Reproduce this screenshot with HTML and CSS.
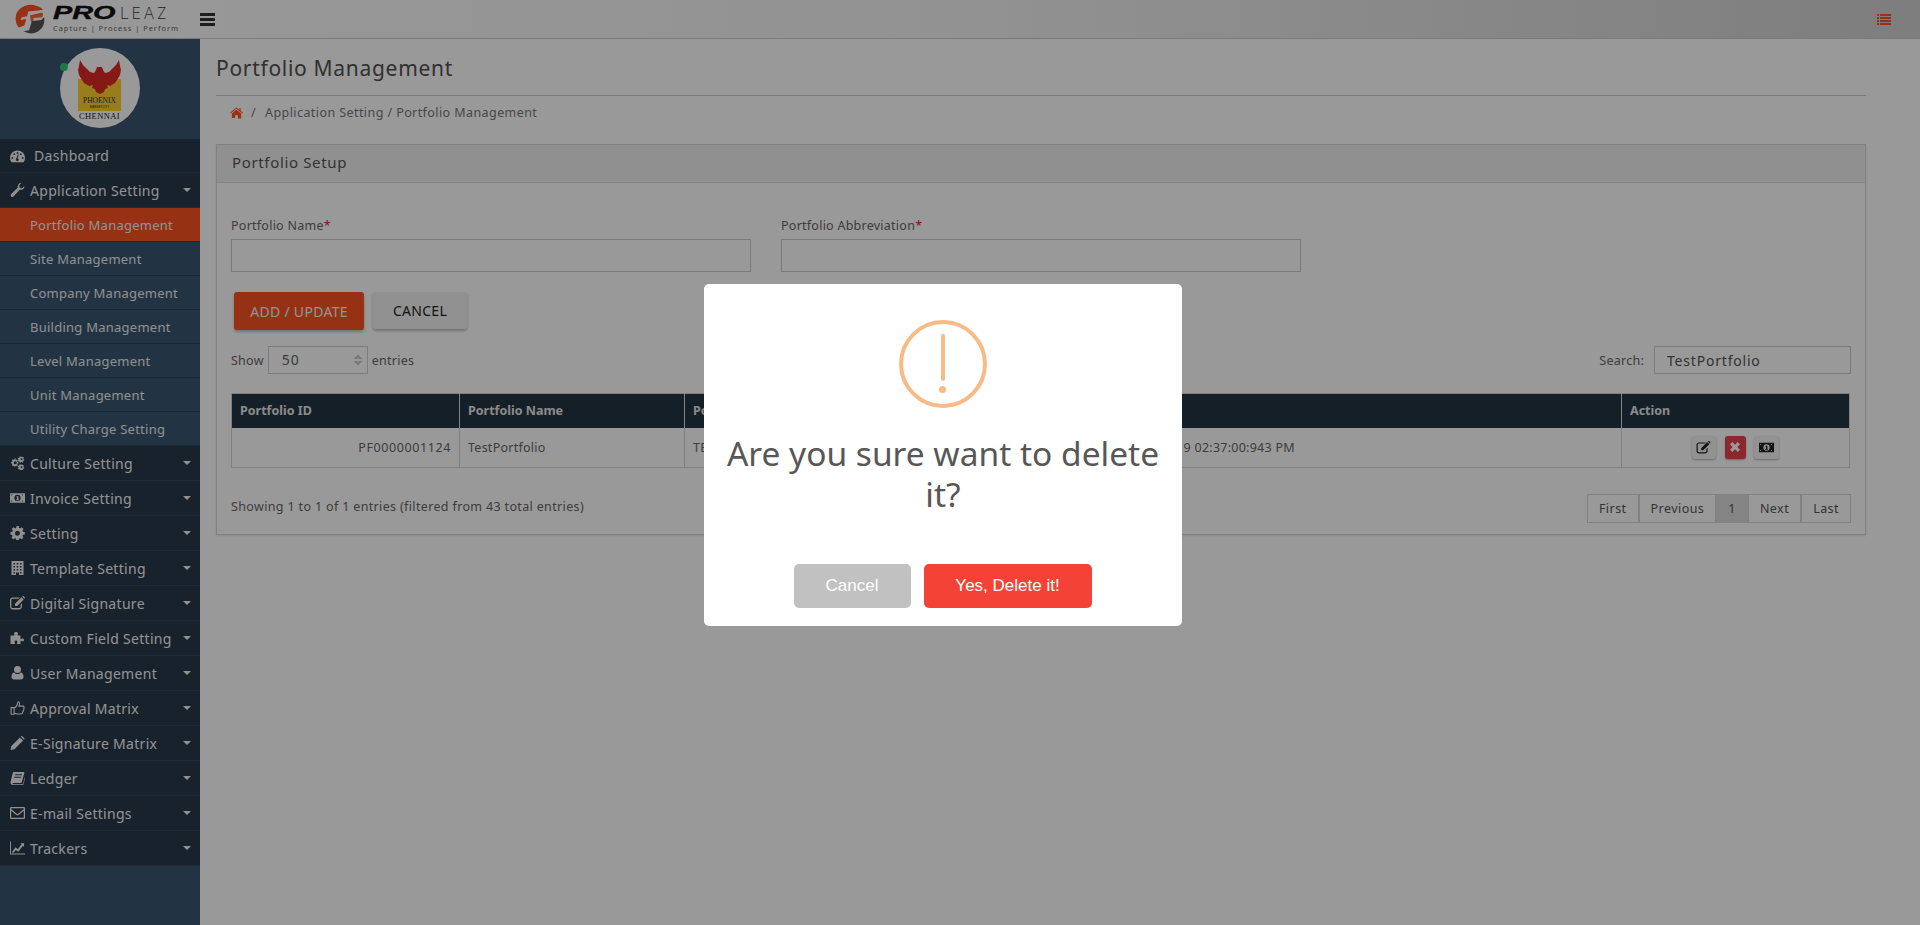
FILE: index.html
```html
<!DOCTYPE html>
<html lang="en">
<head>
    <meta charset="UTF-8">
    <title>Portfolio Management</title>
    <link rel="stylesheet" href="styles.css">
</head>
<body>
    <svg class="sprite" xmlns="http://www.w3.org/2000/svg">
        <symbol id="i-gauge" viewBox="0 0 16 14"><path d="M8 1a8 8 0 0 0-8 8c0 1.600.4 3 1.200 4.200.2.300.4.400.7.400h12.200c.3 0 .5-.1.700-.4C15.600 12 16 10.600 16 9a8 8 0 0 0-8-8zM2.500 10a1 1 0 1 1 0-2 1 1 0 0 1 0 2zm2-4a1 1 0 1 1 0-2 1 1 0 0 1 0 2zM8 4.700a1 1 0 1 1 0-2 1 1 0 0 1 0 2zm1.300 5.700a1.600 1.600 0 1 1-2.300-1.100l1.300-4 1 .3-1.300 4c.6.100 1.100.4 1.300.8zM11.500 6a1 1 0 1 1 0-2 1 1 0 0 1 0 2zm2 4a1 1 0 1 1 0-2 1 1 0 0 1 0 2z"/></symbol>
        <symbol id="i-wrench" viewBox="0 0 14 14"><path d="M13.700 3.200c.2.700.1 1.800-.6 2.600-1 1.100-2.400 1.300-3.600.8l-6.300 6.700c-.7.800-1.800.8-2.500.1-.7-.7-.7-1.800 0-2.500L7.400 4.600C7 3.400 7.200 2 8.200 1 9.100.1 10.200-.1 11-.1L8.800 2.200l.4 2.500 2.400.5z"/></symbol>
        <symbol id="i-cogs" viewBox="0 0 16 14"><path d="M5.600 3.500l.9.300.8-.6 1 1-.6.800.3.900 1 .2v1.500l-1 .2-.3.900.6.800-1 1-.8-.6-.9.300-.2 1H4.900l-.2-1-.9-.3-.8.600-1-1 .6-.8-.3-.9-1-.2V5.900l1-.2.300-.9-.6-.8 1-1 .8.600.9-.3.2-1h1.500zM5.600 5a1.700 1.700 0 1 0 0 3.400 1.700 1.700 0 0 0 0-3.400z"/><path d="M13 0l.5.700.8-.1.500 1-.6.600.2.800.8.300-.1 1-.9.200-.4.700.3.800-.9.500-.6-.6-.8.100-.5.700-1-.3V5.700l-.6-.5-.8.200-.5-.9.600-.6-.1-.8-.7-.5.300-1 .9.100.6-.6-.1-.8 1-.4.500.7h.8zM12.300 2a1 1 0 1 0 0 2 1 1 0 0 0 0-2zM13 8.500l.5.700.8-.1.500 1-.6.600.2.800.8.300-.1 1-.9.200-.4.700.3.800-.9.500-.6-.6-.8.100-.5.700-1-.3v-.9l-.6-.5-.8.200-.5-.9.600-.6-.1-.8-.7-.5.300-1 .9.100.6-.6-.1-.8 1-.4.500.7h.8zm-.7 2a1 1 0 1 0 0 2 1 1 0 0 0 0-2z"/></symbol>
        <symbol id="i-money" viewBox="0 0 16 12"><path fill-rule="evenodd" d="M0 1h16v10H0zm1.200 1.200v1.400a2 2 0 0 0 1.400-1.400zm11.200 0c.2.700.7 1.200 1.400 1.400V2.200zM1.200 8.400v1.400h1.400a2 2 0 0 0-1.400-1.400zm12.600 0c-.7.200-1.200.7-1.400 1.400h1.400zM8 2.600A3.300 3.400 0 1 0 8 9.400 3.300 3.400 0 0 0 8 2.600z"/><path fill-rule="evenodd" d="M7 4h2v3.500h.6v.8H6.400v-.8H7.400V5.200H6.800z"/></symbol>
        <symbol id="i-cog" viewBox="0 0 14 14"><path fill-rule="evenodd" d="M8.200 0l.4 1.900 1.100.5 1.600-1.100 1.700 1.700-1.100 1.600.5 1.100 1.900.4v2.400l-1.900.4-.5 1.100 1.100 1.600-1.700 1.700-1.600-1.100-1.100.5-.4 1.900H5.800l-.4-1.900-1.100-.5-1.600 1.100L1 11.600l1.100-1.600-.5-1.100L0 8.500V6.100l1.900-.4.500-1.100L1.300 3 3 1.300l1.600 1.100 1.100-.5L6.100 0zM7 4.700a2.500 2.500 0 1 0 0 5 2.500 2.500 0 0 0 0-5z"/></symbol>
        <symbol id="i-building" viewBox="0 0 12 14"><path fill-rule="evenodd" d="M0 0h12v14H7.500v-2.500h-3V14H0zm2 2v1.500h1.500V2zm3.200 0v1.500h1.600V2zm3.300 0v1.500H10V2zM2 5v1.500h1.500V5zm3.200 0v1.500h1.600V5zm3.300 0v1.500H10V5zM2 8v1.500h1.500V8zm3.200 0v1.500h1.600V8zm3.300 0v1.500H10V8zM2 11v1.500h1.500V11zm6.500 0v1.500H10V11z"/></symbol>
        <symbol id="i-edit" viewBox="0 0 15 14"><path d="M2.600 1.500H10L8.700 2.800H2.600c-.7 0-1.300.6-1.300 1.300v6.700c0 .7.600 1.300 1.300 1.300h6.700c.7 0 1.300-.6 1.300-1.300V8.500l1.300-1.300v3.600c0 1.400-1.200 2.600-2.600 2.600H2.600C1.200 13.400 0 12.200 0 10.800V4.100c0-1.400 1.200-2.600 2.600-2.600z"/><path d="M5 7.700L11.500 1.200l2.200 2.200-6.500 6.500H5zM12.100.6l.5-.4c.3-.3.8-.3 1.100 0l1 1c.3.300.3.800 0 1.100l-.4.500z"/></symbol>
        <symbol id="i-puzzle" viewBox="0 0 14 14"><path d="M5.500 1C6.700 1 7.500 1.700 7.500 2.500c0 .7-.5 1-.5 1.500 0 .3.300.5.800.5H10v3c0 .4.200.7.500.7.500 0 .8-.6 1.500-.6.900 0 1.500.700 1.500 1.400s-.6 1.300-1.500 1.300c-.7 0-1-.5-1.500-.5-.3 0-.5.300-.5.700V13H7c-.5 0-.7-.3-.7-.6 0-.5.600-.8.600-1.500 0-.8-.6-1.400-1.400-1.400s-1.500.6-1.500 1.400c0 .7.600 1 .6 1.500 0 .3-.2.600-.6.600H0V4.500h3.200c.5 0 .8-.2.800-.5 0-.5-.5-.8-.5-1.500C3.500 1.700 4.300 1 5.500 1z"/></symbol>
        <symbol id="i-user" viewBox="0 0 12 14"><path d="M6 0a3.500 3.500 0 1 1 0 7 3.500 3.500 0 0 1 0-7zM2.800 6.500C3.600 7.500 4.700 8 6 8s2.400-.5 3.200-1.500c1.800 0 2.800 1.600 2.800 4.300 0 1.900-1.100 2.700-2.400 2.700H2.400C1.100 13.500 0 12.700 0 10.800 0 8.100 1 6.500 2.800 6.500z"/></symbol>
        <symbol id="i-thumb" viewBox="0 0 14 14"><path fill="none" stroke="currentColor" stroke-width="1.100" d="M.6 6.600h3v6.600h-3zM3.600 7c1.800-.6 3.100-2.400 3.300-4.300.1-1 .2-2 .9-2 1.400 0 1.600 2 .6 4.400h3.900c1.400 0 1.700 1.300.9 2.100.5.800.3 1.600-.4 2 .2.800-.1 1.500-.7 1.800.1 1.200-.5 2-1.800 2H7c-1.200 0-2.200-.6-3.400-.8"/></symbol>
        <symbol id="i-pencil" viewBox="0 0 14 14"><path d="M0 14l.8-3.900L9.500 1.400l3.100 3.100L3.900 13.200zM10.300.6l.4-.4c.3-.3.8-.3 1.100 0l2 2c.3.300.3.800 0 1.100l-.4.400z"/></symbol>
        <symbol id="i-book" viewBox="0 0 14 14"><path fill-rule="evenodd" d="M3.400 1H13c.7 0 1 .5.800 1.200l-2.400 8.600c-.2.800-.8 1.200-1.500 1.200H2.800c-.6 0-.9.300-.8.700.1.300.4.500.8.500h9.100c.3 0 .5-.2.600-.5l2-7 .5.400-2.200 7.600c-.2.500-.6.800-1.100.8H2.600C1.300 14 .2 13 0 11.700c0-.5 0-.9.200-1.400L2.300 2c.1-.5.500-1 1.100-1zm1.400 2.300l-.3 1h6.800l.3-1zM4 5.700l-.3 1h6.800l.3-1z"/></symbol>
        <symbol id="i-mail" viewBox="0 0 15 12"><path fill="none" stroke="currentColor" stroke-width="1.200" d="M1.300.6h12.400c.4 0 .7.300.7.700v9.400c0 .4-.3.700-.7.700H1.300c-.4 0-.7-.3-.7-.7V1.300c0-.4.300-.7.700-.7zM.8 2.500l5.600 4.700c.6.500 1.600.5 2.200 0l5.600-4.700"/></symbol>
        <symbol id="i-chart" viewBox="0 0 16 14"><path d="M0 0h1v12.800h15V14H0z"/><path d="M2.500 10.600l3.400-4.400 2.500 2L12.300 3l-1.300-1.200h4v4l-1.200-1.300-5 6.500-2.600-2-2.400 3H2.500z"/></symbol>
        <symbol id="i-home" viewBox="0 0 14 12"><path d="M7 2.400l5 4.100v4.900c0 .3-.2.500-.5.500H8.500V8.500h-3v3h-3c-.3 0-.5-.2-.5-.5V6.500zM7 0l3 2.500V1h1.500v2.700L14 5.800l-.7.800L7 1.400.7 6.600 0 5.800z"/></symbol>
        <symbol id="i-times" viewBox="0 0 10 10"><path d="M0 2.300L2.300 0 5 2.700 7.700 0 10 2.300 7.300 5 10 7.700 7.700 10 5 7.300 2.300 10 0 7.700 2.700 5 0 2.300z"/></symbol>
    </svg>

    <header class="topbar">
        <div class="brand">
            <svg class="brand-mark" viewBox="0 0 32 32">
                <path fill="#fa5321" d="M14 1C9 2 3 5 1 12c-1 5 0 10 3 13l6-2 2-7-6 1 1-3 6-1 1-5 11-1 5-1C27 3 20 0 14 1z"/>
                <path fill="#fa5321" d="M16 12l13-3 1 2-1 3-9 1-1 4h-2z" opacity=".9"/>
                <path fill="#555" d="M31 14c1 6-1 11-5 14-3 3-8 4-12 3l-5-2 6-1 3-10 10-1z"/>
            </svg>
            <div class="brand-name">
                <div class="brand-word"><b>PRO</b><span>LEAZ</span></div>
                <div class="brand-tag">Capture | Process | Perform</div>
            </div>
        </div>
        <div class="burger"><i></i><i></i><i></i></div>
        <div class="top-list"><i></i><i></i><i></i><i></i></div>
    </header>

    <div class="layout">
        <aside class="sidebar">
            <div class="profile">
                <div class="avatar">
                    <svg viewBox="0 0 80 80">
                        <rect x="18" y="31" width="43" height="32" fill="#ffd030"/>
                        <path fill="#e02a24" d="M39 19L42 19 43 22 45 25 49 24 53 20 56 17 59 12 60 18 61 22 60 27 57 32 55 35 50 38 47 37 48 40 45 41 44 44 40 46 36 44 35 41 32 40 33 37 29 38 24 35 22 32 19 27 18 22 19 18 20 12 23 17 26 20 30 24 34 25 36 22 37 19z"/>
                        <text class="logo-phoenix" x="39.500" y="55" text-anchor="middle">PHOENIX</text>
                        <text class="logo-market" x="39.500" y="60" text-anchor="middle">MARKETCITY</text>
                        <text class="logo-city" x="39.500" y="70.500" text-anchor="middle">CHENNAI</text>
                    </svg>
                </div>
                <span class="online"></span>
            </div>
            <ul class="menu">
                <li class="menu-item menu-first"><svg class="ico"><use href="#i-gauge"/></svg>Dashboard</li>
                <li class="menu-item"><svg class="ico"><use href="#i-wrench"/></svg>Application Setting<span class="caret"></span></li>
                <li class="sub-item active">Portfolio Management</li>
                <li class="sub-item">Site Management</li>
                <li class="sub-item">Company Management</li>
                <li class="sub-item">Building Management</li>
                <li class="sub-item">Level Management</li>
                <li class="sub-item">Unit Management</li>
                <li class="sub-item">Utility Charge Setting</li>
                <li class="menu-item"><svg class="ico"><use href="#i-cogs"/></svg>Culture Setting<span class="caret"></span></li>
                <li class="menu-item"><svg class="ico"><use href="#i-money"/></svg>Invoice Setting<span class="caret"></span></li>
                <li class="menu-item"><svg class="ico"><use href="#i-cog"/></svg>Setting<span class="caret"></span></li>
                <li class="menu-item"><svg class="ico"><use href="#i-building"/></svg>Template Setting<span class="caret"></span></li>
                <li class="menu-item"><svg class="ico"><use href="#i-edit"/></svg>Digital Signature<span class="caret"></span></li>
                <li class="menu-item"><svg class="ico"><use href="#i-puzzle"/></svg>Custom Field Setting<span class="caret"></span></li>
                <li class="menu-item"><svg class="ico"><use href="#i-user"/></svg>User Management<span class="caret"></span></li>
                <li class="menu-item"><svg class="ico"><use href="#i-thumb"/></svg>Approval Matrix<span class="caret"></span></li>
                <li class="menu-item"><svg class="ico"><use href="#i-pencil"/></svg>E-Signature Matrix<span class="caret"></span></li>
                <li class="menu-item"><svg class="ico"><use href="#i-book"/></svg>Ledger<span class="caret"></span></li>
                <li class="menu-item"><svg class="ico"><use href="#i-mail"/></svg>E-mail Settings<span class="caret"></span></li>
                <li class="menu-item"><svg class="ico"><use href="#i-chart"/></svg>Trackers<span class="caret"></span></li>
            </ul>
        </aside>

        <main class="content">
            <h1 class="page-title">Portfolio Management</h1>
            <div class="breadcrumb">
                <svg class="home"><use href="#i-home"/></svg>
                <span class="slash">/</span>
                <span>Application Setting / Portfolio Management</span>
            </div>

            <section class="panel">
                <div class="panel-head">Portfolio Setup</div>
                <div class="panel-body">
                    <div class="form-row">
                        <div class="field">
                            <label>Portfolio Name<em>*</em></label>
                            <input type="text">
                        </div>
                        <div class="field">
                            <label>Portfolio Abbreviation<em>*</em></label>
                            <input type="text">
                        </div>
                    </div>
                    <div class="form-actions">
                        <button class="btn btn-add">ADD / UPDATE</button>
                        <button class="btn btn-cancel">CANCEL</button>
                    </div>
                    <div class="table-tools">
                        <div class="length">Show <span class="select-box">50<span class="spin"></span></span> entries</div>
                        <div class="search">Search: <input type="text" value="TestPortfolio"></div>
                    </div>
                    <table class="grid">
                        <thead>
                            <tr>
                                <th class="c-id">Portfolio ID</th>
                                <th class="c-name">Portfolio Name</th>
                                <th class="c-abbr">Portfolio Abbreviation</th>
                                <th>Date</th>
                                <th class="c-action">Action</th>
                            </tr>
                        </thead>
                        <tbody>
                            <tr>
                                <td class="right">PF0000001124</td>
                                <td>TestPortfolio</td>
                                <td>TEST</td>
                                <td>10/11/2019 02:37:00:943 PM</td>
                                <td class="actions">
                                    <span class="act"><svg class="act-ico"><use href="#i-edit"/></svg></span>
                                    <span class="act act-del"><svg class="act-x"><use href="#i-times"/></svg></span>
                                    <span class="act act-money"><svg class="act-ico"><use href="#i-money"/></svg></span>
                                </td>
                            </tr>
                        </tbody>
                    </table>
                    <div class="table-foot">
                        <div>Showing 1 to 1 of 1 entries (filtered from 43 total entries)</div>
                        <div class="pager">
                            <span>First</span><span>Previous</span><span class="current">1</span><span>Next</span><span>Last</span>
                        </div>
                    </div>
                </div>
            </section>
        </main>
    </div>

    <div class="overlay">
        <div class="modal">
            <div class="warn"><i class="warn-line"></i><i class="warn-dot"></i></div>
            <h2 class="modal-title">Are you sure want to delete it?</h2>
            <div class="modal-actions">
                <button class="swal swal-cancel">Cancel</button>
                <button class="swal swal-ok">Yes, Delete it!</button>
            </div>
        </div>
    </div>
</body>
</html>
```

FILE: styles.css
```css
* {
    box-sizing: border-box;
}
html, body {
    height: 100%;
}
body {
    margin: 0;
    height: 925px;
    overflow: hidden;
    font-family: "Noto Sans", sans-serif;
    font-size: 12.5px;
    color: #555;
    background-color: #fff;
}
.sprite {
    display: none;
}

/* top bar */
.topbar {
    display: flex;
    align-items: center;
    height: 39px;
    padding-left: 15px;
    background: linear-gradient(to right, #fff 0%, #f4f4f4 50%, #d2d2d2 100%);
    border-bottom: 1px solid #ccc;
}
.brand {
    display: flex;
    align-items: center;
    gap: 8px;
}
.brand-mark {
    width: 30px;
    height: 30px;
}
.brand-name {
    width: 124px;
}
.brand-word {
    display: flex;
    align-items: baseline;
    font-family: "Liberation Sans", sans-serif;
    font-size: 17px;
    line-height: 17px;
    color: #111;
}
.brand-word b {
    display: block;
    width: 67px;
    font-style: italic;
    font-weight: 700;
    font-size: 18px;
    -webkit-text-stroke: .4px #111;
    transform: scaleX(1.6);
    transform-origin: left;
}
.brand-word span {
    font-family: Inter, sans-serif;
    font-weight: 200;
    font-size: 16px;
    letter-spacing: 2.6px;
    color: #333;
}
.brand-tag {
    font-size: 7.5px;
    line-height: 9px;
    letter-spacing: .95px;
    white-space: nowrap;
    color: #666;
    margin-top: 2px;
}
.burger {
    display: flex;
    flex-direction: column;
    gap: 2px;
    margin-left: 23px;
    width: 15px;
}
.burger i {
    height: 3px;
    background-color: #333;
}
.top-list {
    display: flex;
    flex-direction: column;
    gap: 1px;
    margin-left: auto;
    margin-right: 29px;
    width: 14px;
}
.top-list i {
    height: 2px;
    background: linear-gradient(to right, #fa5321 2px, transparent 2px, transparent 3px, #fa5321 3px);
}

/* sidebar */
.layout {
    display: flex;
    height: 886px;
}
.sidebar {
    width: 200px;
    flex-shrink: 0;
    background-color: #395771;
}
.profile {
    position: relative;
    height: 100px;
    padding-top: 9px;
}
.avatar {
    width: 80px;
    height: 80px;
    margin: 0 auto;
    border-radius: 50%;
    background-color: #fff;
    overflow: hidden;
}
.avatar svg {
    display: block;
    width: 80px;
    height: 80px;
}
.logo-phoenix {
    font-family: "Liberation Serif", serif;
    font-size: 7.500px;
    fill: #234;
}
.logo-market {
    font-family: "Liberation Sans", sans-serif;
    font-size: 3px;
    fill: #234;
}
.logo-city {
    font-family: "Liberation Serif", serif;
    font-size: 8.500px;
    letter-spacing: .4px;
    fill: #222;
}
.online {
    position: absolute;
    left: 60px;
    top: 24px;
    width: 8px;
    height: 8px;
    border-radius: 50%;
    background-color: #2ecc71;
}
.menu {
    margin: 0;
    padding: 0;
    list-style: none;
}
.menu-item {
    position: relative;
    display: flex;
    align-items: center;
    height: 35px;
    padding-left: 10px;
    font-size: 14px;
    letter-spacing: .3px;
    color: #f4f4f4;
    background-color: #28394a;
    border-bottom: 1px solid #33485c;
}
.menu-first {
    height: 34px;
}
.menu-first .ico {
    margin-right: 9px;
}
.ico {
    width: 15px;
    height: 14px;
    margin-right: 5px;
    flex-shrink: 0;
    fill: currentColor;
    color: #f0f0f0;
}
.caret {
    position: absolute;
    right: 9px;
    top: 15px;
    border-left: 4px solid transparent;
    border-right: 4px solid transparent;
    border-top: 4px solid #f4f4f4;
}
.sub-item {
    display: flex;
    align-items: center;
    height: 34px;
    padding-left: 30px;
    font-size: 13px;
    letter-spacing: .25px;
    color: #eee;
    background-color: #395771;
    border-bottom: 1px solid #2c4358;
}
.sub-item.active {
    color: #f2f2f2;
    background-color: #fa5321;
}

/* main content */
.content {
    flex: 1;
    padding: 0 54px 0 16px;
}
.page-title {
    margin: 0;
    height: 57px;
    padding-top: 15px;
    font-size: 21px;
    font-weight: 400;
    line-height: 29px;
    letter-spacing: .7px;
    color: #505050;
    border-bottom: 1px solid #ccc;
}
.breadcrumb {
    display: flex;
    align-items: center;
    height: 33px;
    padding-left: 14px;
    letter-spacing: .42px;
    color: #777;
}
.home {
    width: 13px;
    height: 12px;
    fill: #fa5321;
}
.slash {
    margin: 0 9px 0 8px;
}
.panel {
    margin-top: 15px;
    height: 391px;
    border: 1px solid #d8d8d8;
    box-shadow: 0 1px 2px rgba(0, 0, 0, .1);
}
.panel-head {
    height: 38px;
    padding: 0 15px;
    font-size: 15px;
    line-height: 34px;
    letter-spacing: .65px;
    color: #555;
    background-color: #f0f0f0;
    border-bottom: 1px solid #ddd;
}
.panel-body {
    padding: 36px 14px 0;
}
.form-row {
    display: flex;
    gap: 30px;
}
.field {
    width: 520px;
}
.field label {
    display: block;
    height: 20px;
    line-height: 14px;
    letter-spacing: .25px;
    color: #666;
}
.field em {
    color: #e0202c;
    font-style: normal;
}
.field input {
    display: block;
    width: 100%;
    height: 33px;
    border: 1px solid #ccc;
    background-color: #fff;
}
.form-actions {
    display: flex;
    gap: 9px;
    padding: 20px 3px 0;
}
.btn {
    height: 38px;
    border: 0;
    border-radius: 3px;
    font-family: inherit;
    font-size: 14px;
    letter-spacing: .3px;
    box-shadow: 0 2px 3px rgba(0, 0, 0, .25);
}
.btn-add {
    width: 130px;
    color: #f4f4f4;
    background-color: #fa5321;
}
.btn-cancel {
    width: 94px;
    height: 37px;
    color: #222;
    background-color: #f2f2f2;
}
.table-tools {
    display: flex;
    align-items: center;
    justify-content: space-between;
    margin-top: 16px;
    color: #666;
    letter-spacing: .25px;
}
.length {
    display: flex;
    align-items: center;
    gap: 4px;
}
.select-box {
    position: relative;
    display: block;
    width: 100px;
    height: 28px;
    padding-left: 13px;
    font-size: 14px;
    letter-spacing: 1px;
    line-height: 26px;
    border: 1px solid #cfcfc8;
}
.spin {
    position: absolute;
    right: 5px;
    top: 7px;
    width: 8px;
    height: 12px;
    background:
        linear-gradient(to bottom right, transparent 50%, #ccc 50%) left top / 4px 5px no-repeat,
        linear-gradient(to bottom left, transparent 50%, #ccc 50%) right top / 4px 5px no-repeat,
        linear-gradient(to top right, transparent 50%, #ccc 50%) left bottom / 4px 5px no-repeat,
        linear-gradient(to top left, transparent 50%, #ccc 50%) right bottom / 4px 5px no-repeat;
}
.search {
    display: flex;
    align-items: center;
    gap: 10px;
}
.search input {
    width: 197px;
    height: 28px;
    padding: 0 12px;
    border: 1px solid #cfcfc8;
    font-family: inherit;
    font-size: 14px;
    letter-spacing: .8px;
    color: #555;
    background: transparent;
}
.grid {
    width: 1619px;
    margin-top: 19px;
    border-collapse: collapse;
    table-layout: fixed;
    border: 1px solid #d6d6d6;
}
.grid th {
    height: 34px;
    padding: 0 8px;
    text-align: left;
    font-weight: 700;
    color: #e6e6e6;
    background-color: #233444;
    border-right: 1px solid #ddd;
}
.grid td {
    height: 40px;
    padding: 0 8px;
    letter-spacing: .25px;
    color: #666;
    white-space: nowrap;
    border-right: 1px solid #d6d6d6;
    border-bottom: 1px solid #d6d6d6;
}
.grid td.right {
    letter-spacing: .6px;
}
.c-id {
    width: 228px;
}
.c-name {
    width: 225px;
}
.c-abbr {
    width: 429px;
}
.c-action {
    width: 228px;
}
.right {
    text-align: right;
}
.actions {
    text-align: center;
}
.act {
    display: inline-flex;
    align-items: center;
    justify-content: center;
    width: 24px;
    height: 23px;
    margin: 0 2.5px;
    vertical-align: middle;
    border-radius: 3px;
    background-color: #f4f4f4;
    box-shadow: 0 1px 2px rgba(0, 0, 0, .3);
}
.act-del {
    width: 21px;
    background-color: #e8424f;
}
.act-money {
    width: 25px;
}
.act-ico {
    width: 15px;
    height: 13px;
    fill: #222;
}
.act-x {
    width: 10px;
    height: 10px;
    fill: #fff;
}
.table-foot {
    display: flex;
    align-items: center;
    justify-content: space-between;
    margin-top: 26px;
    letter-spacing: .35px;
    color: #666;
}
.table-foot > div:first-child {
    margin-top: -4px;
}
.pager {
    display: flex;
}
.pager span {
    height: 29px;
    padding: 0 11px;
    line-height: 27px;
    letter-spacing: .45px;
    color: #555;
    border: 1px solid #d8d8d8;
}
.pager .current {
    padding: 0 11px;
    background-color: #ddd;
    border-color: #ddd;
}

/* delete dialog */
.overlay {
    position: fixed;
    top: 0;
    left: 0;
    right: 0;
    bottom: 0;
    display: flex;
    justify-content: center;
    align-items: flex-start;
    padding-top: 284px;
    padding-right: 34px;
    background-color: rgba(0, 0, 0, .4);
}
.modal {
    width: 478px;
    height: 342px;
    padding: 36px 16px 0;
    border-radius: 5px;
    text-align: center;
    background-color: #fff;
}
.warn {
    position: relative;
    width: 88px;
    height: 88px;
    margin: 0 auto;
    border: 4px solid #f8bb86;
    border-radius: 50%;
}
.warn-line {
    position: absolute;
    left: 38px;
    top: 10px;
    width: 4px;
    height: 47px;
    border-radius: 2px;
    background-color: #f8bb86;
}
.warn-dot {
    position: absolute;
    left: 36px;
    top: 62px;
    width: 7px;
    height: 7px;
    border-radius: 50%;
    background-color: #f8bb86;
}
.modal-title {
    margin: 25px 0 0;
    font-size: 33.5px;
    font-weight: 400;
    line-height: 41px;
    color: #575757;
}
.modal-actions {
    display: flex;
    justify-content: center;
    gap: 13px;
    margin-top: 49px;
    padding-right: 1px;
}
.swal {
    height: 44px;
    border: 0;
    border-radius: 5px;
    font-family: "Liberation Sans", sans-serif;
    font-size: 17px;
    color: #fff;
}
.swal-cancel {
    width: 117px;
    background-color: #c1c1c1;
}
.swal-ok {
    width: 168px;
    background-color: #f44336;
}
```
